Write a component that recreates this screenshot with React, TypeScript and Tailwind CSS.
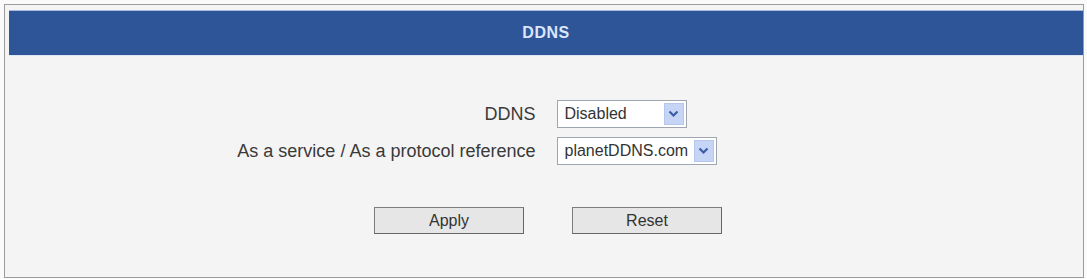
import React from 'react';

const font = { fontFamily: '"Liberation Sans", Arial, sans-serif' };

const DropBox: React.FC<{ value: string; width: string }> = ({ value, width }) => (
  <div className={`${width} h-[28px] flex items-stretch border border-[#9fa6b0] bg-white p-[2px]`}>
    <div className="flex-1 flex items-center pl-[5px] text-[16px] text-[#333] leading-none">{value}</div>
    <div className="w-[20px] bg-[#c6d5f6] border border-[#b6c7ee] flex items-center justify-center">
      <svg width="11" height="8" viewBox="0 0 11 8">
        <path d="M1.5 1.5 L5.5 5.5 L9.5 1.5" fill="none" stroke="#3b5ca8" strokeWidth="2.2" />
      </svg>
    </div>
  </div>
);

const Btn: React.FC<{ label: string }> = ({ label }) => (
  <button className="w-[150px] h-[27px] bg-[#e6e6e6] border border-[#7d7d7d] border-b-[#666] border-r-[#666] text-[16px] text-[#333] leading-none">
    {label}
  </button>
);

export default function App() {
  return (
    <div className="w-[1087px] h-[279px] bg-[#fafafa] pt-[4px] pl-[4px]" style={font}>
      <div className="w-[1080px] h-[274px] border border-[#9c9c9c] bg-[#f4f4f4] pt-[5px] pl-[4px] flex flex-col">
        <div className="h-[46px] bg-[#2d5597] border-t border-[#a8bbe0] border-b border-b-[#dfe7f6] flex items-center justify-center">
          <span className="text-[16px] font-bold text-[#dbe6fa] tracking-[0.5px] leading-none">DDNS</span>
        </div>

        <div className="mt-[44px] grid grid-cols-2 gap-x-[21px] gap-y-[9px] items-center text-[18px] text-[#3a3a3a]">
          <div className="text-right leading-none">DDNS</div>
          <div>
            <DropBox value="Disabled" width="w-[130px]" />
          </div>
          <div className="text-right leading-none">As a service / As a protocol reference</div>
          <div>
            <DropBox value="planetDDNS.com" width="w-[160px]" />
          </div>
        </div>

        <div className="mt-[42px] flex justify-center gap-[48px] pl-[4px]">
          <Btn label="Apply" />
          <Btn label="Reset" />
        </div>
      </div>
    </div>
  );
}
